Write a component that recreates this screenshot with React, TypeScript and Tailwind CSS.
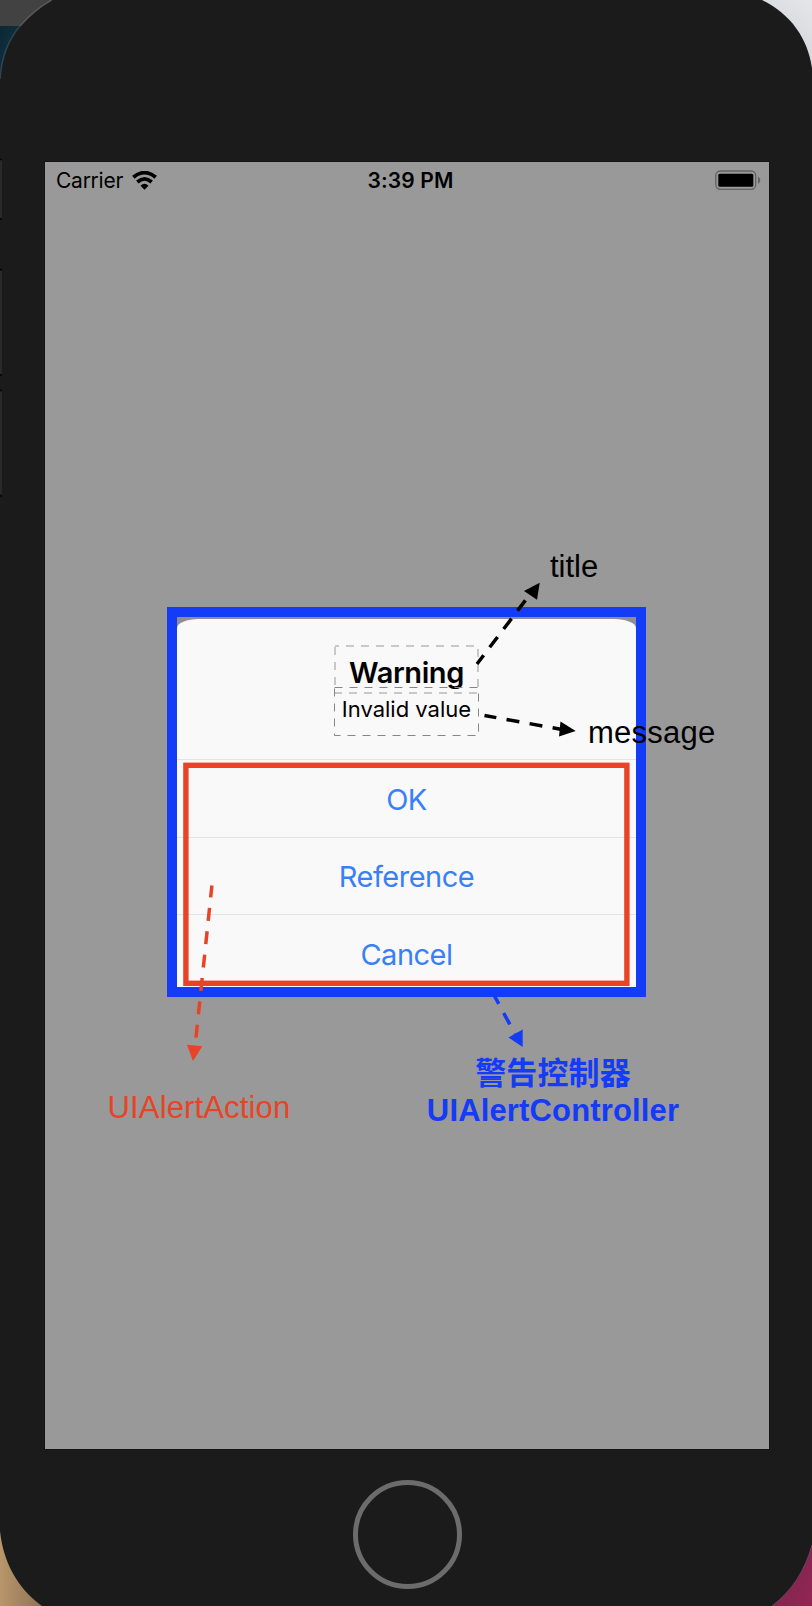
function Backdrop() {
  return (
    <svg className="absolute inset-0" width="812" height="1606" viewBox="0 0 812 1606">
      <defs>
        <linearGradient id="teal" x1="0" y1="0" x2="1" y2="1">
          <stop offset="0" stopColor="#0c2735" />
          <stop offset="1" stopColor="#123748" />
        </linearGradient>
        <linearGradient id="sand" x1="0" y1="0" x2="1" y2="0">
          <stop offset="0" stopColor="#b9966b" />
          <stop offset="1" stopColor="#8d7356" />
        </linearGradient>
        <linearGradient id="silver" x1="1" y1="0" x2="0.4" y2="1">
          <stop offset="0" stopColor="#e5e6ea" />
          <stop offset="1" stopColor="#d0d1d6" />
        </linearGradient>
        <linearGradient id="berry" x1="0" y1="0" x2="1" y2="1">
          <stop offset="0" stopColor="#74264f" />
          <stop offset="1" stopColor="#942553" />
        </linearGradient>
      </defs>
      <path d="M0 0H51.5Q35 9 20 26H0Z" fill="#424242" />
      <path d="M0 26H20Q2 47 0 79Z" fill="url(#teal)" />
      <path d="M51.5 0Q35 9 20 26" fill="none" stroke="#585858" strokeWidth="1.5" />
      <path d="M20 26Q2 47 0 79" fill="none" stroke="#2d4652" strokeWidth="1.5" />
      <path d="M762 0C791 14 808 39 812 68V0Z" fill="url(#silver)" />
      <path d="M0 1531C3 1561 17 1588 42 1606H0Z" fill="url(#sand)" />
      <path d="M812 1545C805 1570 793 1590 772 1606H812Z" fill="url(#berry)" />
      <path d="M812 1545C805 1570 793 1590 772 1606" fill="none" stroke="#713f58" />
      <path d="M0 160H2V218H0ZM0 271H2V374H0ZM0 391H2V494H0Z" fill="#292929" />
      <path d="M0 159.500H2M0 219H2M0 269.500H2M0 375H2M0 390.500H2M0 496H2" stroke="#050505" strokeWidth="1.500" />
    </svg>
  );
}

function StatusBar() {
  return (
    <div className="grid h-[37px] grid-cols-[1fr_auto_1fr] items-center pl-[11px] pr-[8px] text-black">
      <div className="flex items-center gap-[9px]">
        <span className="text-[21px] leading-none tracking-[-0.25px]">Carrier</span>
        <svg className="-mt-[1px]" width="25" height="19" viewBox="0 0 25 19" fill="none">
          <path d="M1.300 6.300Q12.500 -3 23.700 6.300" stroke="#000" strokeWidth="3.800" />
          <path d="M5.300 11Q12.500 4.800 19.700 11" stroke="#000" strokeWidth="3.700" />
          <path d="M8.500 14.700Q12.500 10.600 16.500 14.700L12.500 18.700Z" fill="#000" />
        </svg>
      </div>
      <span className="ml-[4px] text-[21px] font-semibold leading-none tracking-[0.15px]">3:39 PM</span>
      <svg className="-mt-[1px] justify-self-end" width="46" height="21" viewBox="0 0 46 21">
        <rect x="0.800" y="1" width="39.900" height="18.300" rx="4.500" fill="none" stroke="#626262" strokeWidth="1.300" />
        <rect x="3.300" y="3.700" width="35" height="13" rx="1.500" fill="#000" />
        <path d="M43 6.500Q47.500 10 43 14Z" fill="#626262" />
      </svg>
    </div>
  );
}

function AlertDialog() {
  const actions = ["OK", "Reference", "Cancel"];
  return (
    <div className="ml-[122px] h-[390px] w-[479px] border-[10px] border-[#143bf5] bg-[#8f8f8f] pt-[2px]">
      <div className="flex h-[368px] flex-col overflow-hidden rounded-t-[22px_9px] bg-[#f9f9f9]">
        <div className="flex h-[140px] shrink-0 flex-col items-center pt-[36px] text-black">
          <div className="text-[29px] font-semibold leading-[36px] tracking-[-0.4px]">Warning</div>
          <div className="mt-[4px] text-[22px] leading-[28px] tracking-[0px]">Invalid value</div>
        </div>
        {actions.map((label) => (
          <button key={label} className="relative top-0 h-[77.500px] shrink-0 border-t border-[#e4e4e6] pt-[2px] text-[29px] tracking-[-0.5px] text-[#3880f7]">
            {label}
          </button>
        ))}
      </div>
    </div>
  );
}

function Annotations() {
  return (
    <>
      <svg className="absolute inset-0" width="812" height="1606" viewBox="0 0 812 1606" fill="none">
        <rect x="335" y="646" width="143" height="47" stroke="#b8b8b8" strokeWidth="1.500" strokeDasharray="8 7" strokeDashoffset="4" />
        <rect x="334.500" y="687.500" width="144" height="48" stroke="#868686" strokeDasharray="8 7" />
        <rect x="185.900" y="765.300" width="441" height="218" stroke="#e84326" strokeWidth="5.400" />
        <g strokeWidth="3.500">
          <path d="M477 664L531 593" stroke="#000" strokeDasharray="13 10" strokeDashoffset="2" />
          <path d="M484.500 715.500L562 729.500" stroke="#000" strokeDasharray="13 10.400" strokeDashoffset="1" />
          <path d="M211.900 885.500L195 1047" stroke="#e84326" strokeDasharray="13 10.500" strokeDashoffset="1" />
          <path d="M494.500 996L515 1034" stroke="#143bf5" strokeDasharray="13 10.300" strokeDashoffset="4" />
        </g>
        <path d="M539.700 582.700L524 591L537 599.700ZM575.700 731L560.500 721.500L559 736.500Z" fill="#000" />
        <path d="M187 1044.800L202.300 1046.300L193 1061Z" fill="#e84326" />
        <path d="M508.500 1037.500L522.700 1029.500V1047Z" fill="#143bf5" />
      </svg>
      <div className="absolute left-[550px] top-[549px] font-['Liberation_Sans',sans-serif] text-[31px] leading-[36px] text-black">title</div>
      <div className="absolute left-[588px] top-[715px] font-['Liberation_Sans',sans-serif] text-[31px] leading-[36px] tracking-[0.25px] text-black">message</div>
      <div className="absolute left-[107.500px] top-[1090px] font-['Liberation_Sans',sans-serif] text-[31px] leading-[36px] tracking-[0.150px] text-[#e84326]">UIAlertAction</div>
      <div className="absolute left-[402px] top-[1055px] w-[302px] text-center font-['Liberation_Sans','Noto_Sans_CJK_SC',sans-serif] text-[31px] font-bold leading-[37px] tracking-[0.150px] text-[#143bf5]">
        <div>警告控制器</div>
        <div>UIAlertController</div>
      </div>
    </>
  );
}

export default function App() {
  return (
    <div className="relative flex h-[1606px] w-[812px] flex-col overflow-hidden bg-[#1b1b1b] pt-[162px] font-['Inter',sans-serif]">
      <Backdrop />
      <main className="ml-[45px] h-[1287px] w-[724px] shrink-0 bg-[#999999] shadow-[0_0_0_1px_#141414]">
        <StatusBar />
        <div className="pt-[408px]">
          <AlertDialog />
        </div>
      </main>
      <div className="ml-[353px] mt-[31px] h-[109px] w-[109px] shrink-0 rounded-full border-[5px] border-[#6c6c6c]" />
      <Annotations />
    </div>
  );
}
